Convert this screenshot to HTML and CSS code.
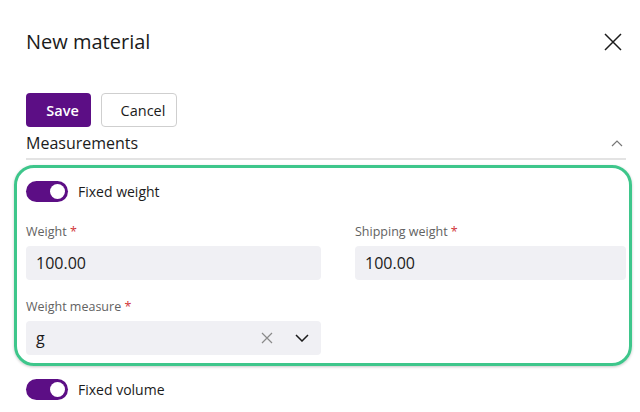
FILE: index.html
```html
<!DOCTYPE html>
<html lang="en">
<head>
<meta charset="utf-8">
<title>New material</title>
<link rel="stylesheet" href="styles.css">
</head>
<body>
<div class="dialog">
  <header class="head">
    <h1 class="title">New material</h1>
    <button class="close" aria-label="Close">
      <svg width="18" height="18" viewBox="0 0 18 18"><path d="M1 1 L17 17 M17 1 L1 17" stroke="#1b1b1b" stroke-width="1.5" fill="none"/></svg>
    </button>
  </header>
  <div class="actions">
    <button class="btn primary">Save</button>
    <button class="btn">Cancel</button>
  </div>
  <div class="section-head">
    <span>Measurements</span>
    <svg class="chev-up" width="12" height="7" viewBox="0 0 12 7"><path d="M1 6 L6 1 L11 6" stroke="#777" stroke-width="1.2" fill="none"/></svg>
  </div>
  <div class="highlight">
    <div class="toggle-row">
      <span class="switch"><span class="knob"></span></span>
      <span>Fixed weight</span>
    </div>
    <div class="grid">
      <div class="field">
        <div class="label">Weight <span class="req">*</span></div>
        <div class="input">100.00</div>
      </div>
      <div class="field">
        <div class="label">Shipping weight <span class="req">*</span></div>
        <div class="input">100.00</div>
      </div>
      <div class="field">
        <div class="label">Weight measure <span class="req">*</span></div>
        <div class="input select">
          <span class="value">g</span>
          <svg class="clear" width="12" height="12" viewBox="0 0 12 12"><path d="M1 1 L11 11 M11 1 L1 11" stroke="#8a8a8a" stroke-width="1.2" fill="none"/></svg>
          <svg class="chev-down" width="14" height="8" viewBox="0 0 14 8"><path d="M1 1 L7 7 L13 1" stroke="#1b1b1b" stroke-width="1.5" fill="none"/></svg>
        </div>
      </div>
    </div>
  </div>
  <div class="toggle-row after">
    <span class="switch"><span class="knob"></span></span>
    <span>Fixed volume</span>
  </div>
</div>
</body>
</html>
```

FILE: styles.css
```css
html, body {
  margin: 0;
  background: #ffffff;
}
body {
  font-family: "Open Sans", "Noto Sans", sans-serif;
  color: #1b1b1b;
}
.dialog {
  padding: 0 14px 0 26px;
}
.head {
  display: flex;
  justify-content: space-between;
  align-items: center;
  padding-top: 28px;
}
.title {
  margin: 0;
  font-size: 20px;
  font-weight: 400;
  line-height: 28px;
}
.close {
  border: 0;
  background: none;
  padding: 0;
  margin-right: 4px;
  display: flex;
}
.actions {
  display: flex;
  gap: 10px;
  margin-top: 37px;
}
.btn {
  font-family: inherit;
  height: 34px;
  width: 76px;
  border: 1px solid #cfcfcf;
  border-radius: 4px;
  background: #fff;
  color: #1b1b1b;
  font-size: 14.5px;
  font-weight: 400;
  padding: 0 0 0 8px;
}
.btn.primary {
  width: 65px;
  border: 0;
  background: #5c0e85;
  color: #fff;
  font-weight: 600;
}
.section-head {
  display: flex;
  justify-content: space-between;
  align-items: center;
  margin-top: 5px;
  padding-bottom: 4px;
  border-bottom: 2px solid #e3e3e3;
  font-size: 16px;
  line-height: 22px;
}
.chev-up {
  margin-right: 3px;
}
.highlight {
  margin: 5px -6px 0 -12px;
  padding: 13px 3px 8px 9px;
  border: 3px solid #3ec68b;
  border-radius: 20px;
  box-shadow: 0 1px 3px rgba(0, 0, 0, 0.22);
}
.toggle-row {
  display: flex;
  align-items: center;
  gap: 10px;
  font-size: 14px;
  line-height: 21px;
}
.toggle-row.after {
  margin-top: 13px;
}
.switch {
  position: relative;
  width: 42px;
  height: 21px;
  border-radius: 11px;
  background: #5c0e85;
  flex: none;
}
.knob {
  position: absolute;
  top: 3px;
  right: 3px;
  width: 15px;
  height: 15px;
  border-radius: 50%;
  background: #fff;
}
.grid {
  display: grid;
  grid-template-columns: 295px 271px;
  column-gap: 34px;
  row-gap: 18px;
  margin-top: 21px;
}
.field {
  display: flex;
  flex-direction: column;
  gap: 5px;
}
.label {
  font-size: 12.5px;
  line-height: 18px;
  color: #626262;
}
.req {
  color: #d13438;
}
.input {
  height: 34px;
  box-sizing: border-box;
  padding: 0 10px;
  border-radius: 4px;
  background: #f0f0f4;
  font-size: 16px;
  display: flex;
  align-items: center;
}
.select .value {
  flex: 1;
}
.select .clear {
  margin-right: 22px;
}
.select .chev-down {
  margin-right: 2px;
}
```
